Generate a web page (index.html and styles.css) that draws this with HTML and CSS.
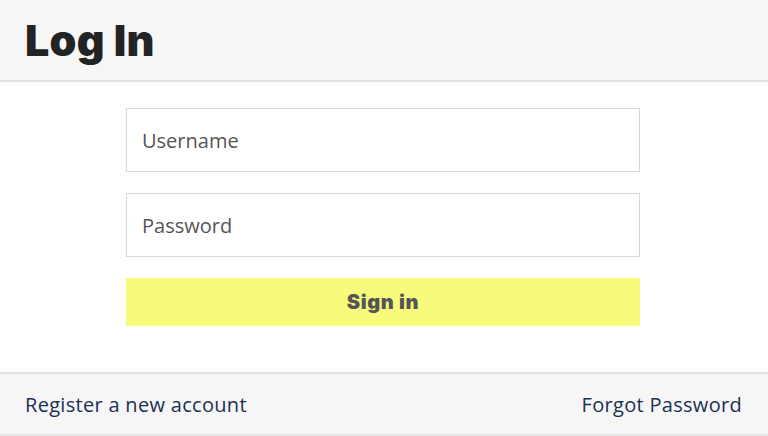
FILE: index.html
```html
<!DOCTYPE html>
<html lang="en">
<head>
    <meta charset="UTF-8">
    <meta name="viewport" content="width=device-width, initial-scale=1.0">
    <title>Log In</title>
    <link rel="stylesheet" href="styles.css">
</head>
<body>
    <header class="page-header">
        <h1>Log In</h1>
    </header>
    <main class="content">
        <form class="login-form" onsubmit="return false;">
            <input type="text" id="username" placeholder="Username">
            <input type="password" id="password" placeholder="Password">
            <button type="submit">Sign in</button>
        </form>
    </main>
    <footer class="page-footer">
        <a href="#">Register a new account</a>
        <a href="#">Forgot Password</a>
    </footer>
</body>
</html>
```

FILE: styles.css
```css
body {
    font-family: "Open Sans", "Noto Sans", sans-serif;
    background-color: #fff;
    color: #333;
    margin: 0;
    padding: 0;
}
.page-header {
    background-color: #f6f6f6;
    border-bottom: 2px solid #e3e3e3;
    height: 82px;
    box-sizing: border-box;
    padding: 0 25px;
    display: flex;
    align-items: center;
}
.page-header h1 {
    margin: 0;
    font-family: Inter, sans-serif;
    font-weight: 900;
    font-size: 43px;
    letter-spacing: 0.3px;
    color: #222324;
}
.content {
    padding: 26px 0 46px;
}
.login-form {
    width: 514px;
    margin: 0 0 0 126px;
    display: flex;
    flex-direction: column;
    gap: 21px;
}
.login-form input {
    height: 64px;
    box-sizing: border-box;
    border: 1px solid #d8d8d8;
    border-radius: 0;
    padding: 0 15px;
    font-family: "Open Sans", sans-serif;
    font-size: 20px;
    color: #444;
    outline: none;
}
.login-form input::placeholder {
    color: #555;
}
.login-form button {
    height: 48px;
    border: none;
    background-color: #f8fa7c;
    font-family: Inter, sans-serif;
    font-weight: 900;
    font-size: 20px;
    letter-spacing: 0.6px;
    color: #555;
    cursor: pointer;
}
.page-footer {
    background-color: #f6f6f6;
    border-top: 2px solid #e3e3e3;
    border-bottom: 2px solid #e3e3e3;
    height: 64px;
    box-sizing: border-box;
    padding: 0 26px 0 25px;
    display: flex;
    justify-content: space-between;
    align-items: center;
}
.page-footer a {
    color: #1c3054;
    text-decoration: none;
    font-size: 20px;
    letter-spacing: 0.3px;
}
```
